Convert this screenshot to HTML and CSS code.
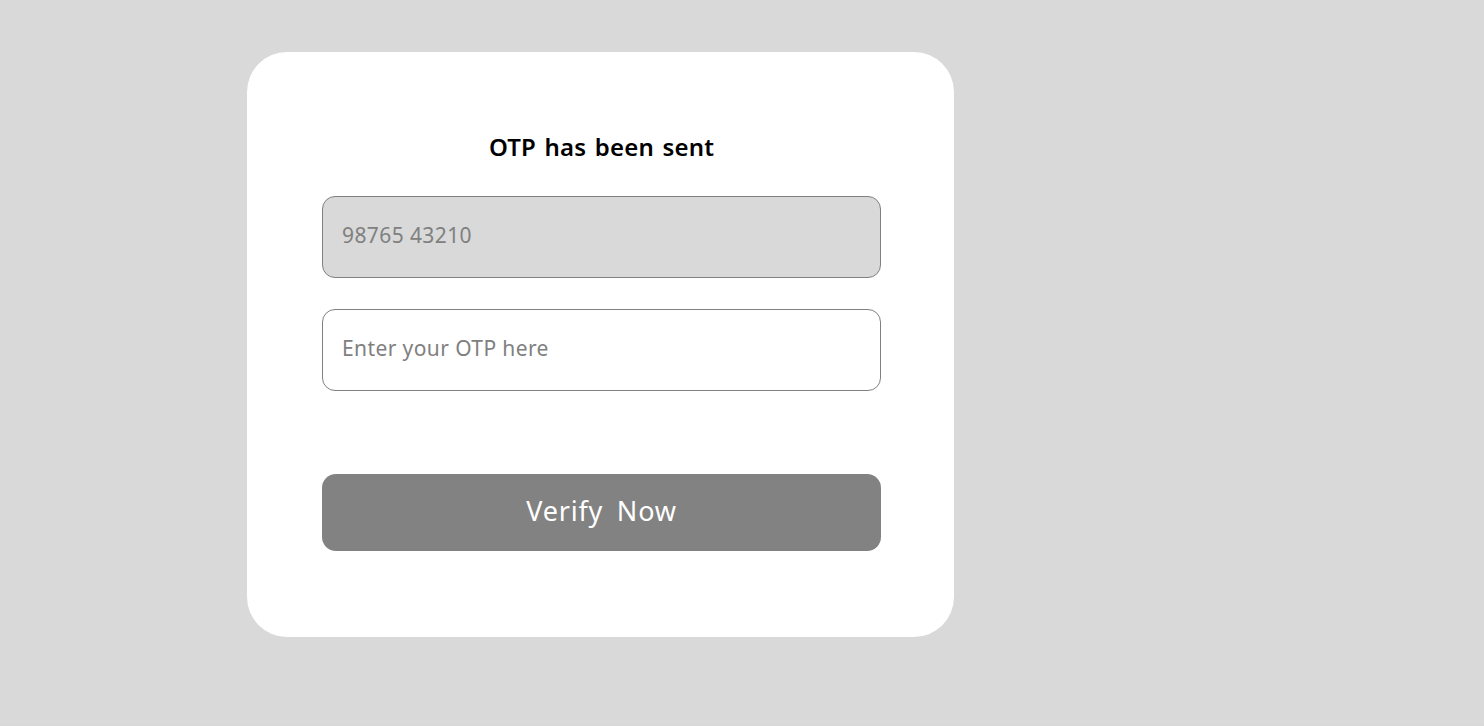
FILE: index.html
```html
<!DOCTYPE html>
<html>
<head>
<meta charset="utf-8">
<link rel="stylesheet" href="styles.css">
</head>
<body>
<div class="card">
  <h1 class="title">OTP has been sent</h1>
  <div class="field field-filled">98765 43210</div>
  <div class="field">Enter your OTP here</div>
  <button class="btn">Verify Now</button>
</div>
</body>
</html>
```
FILE: styles.css
```css
html, body {
  margin: 0;
  padding: 0;
  background: #d9d9d9;
  height: 100%;
}
body {
  font-family: "Noto Sans", "Open Sans", sans-serif;
  padding-top: 52px;
  padding-left: 247px;
  box-sizing: border-box;
}
.card {
  width: 707px;
  height: 585px;
  background: #ffffff;
  border-radius: 40px;
  box-sizing: border-box;
  padding: 80px 73px 0 75px;
  display: flex;
  flex-direction: column;
}
.title {
  margin: 0;
  font-size: 24px;
  line-height: 30px;
  font-weight: 600;
  text-align: center;
  color: #000;
  letter-spacing: 0.2px;
  word-spacing: 2px;
}
.field {
  margin-top: 34px;
  height: 82px;
  box-sizing: border-box;
  border: 1px solid #808080;
  border-radius: 13px;
  padding-left: 19px;
  padding-bottom: 5px;
  display: flex;
  align-items: center;
  font-size: 21px;
  letter-spacing: 0.4px;
  color: #808080;
  background: #ffffff;
}
.field-filled {
  background: #d9d9d9;
}
.field + .field {
  margin-top: 31px;
}
.btn {
  margin-top: 83px;
  height: 77px;
  border: none;
  border-radius: 14px;
  background: #828282;
  color: #ffffff;
  font-family: "Noto Sans", "Open Sans", sans-serif;
  font-size: 27px;
  word-spacing: 6px;
  letter-spacing: 0.8px;
  padding: 0 0 4px 0;
}
```
